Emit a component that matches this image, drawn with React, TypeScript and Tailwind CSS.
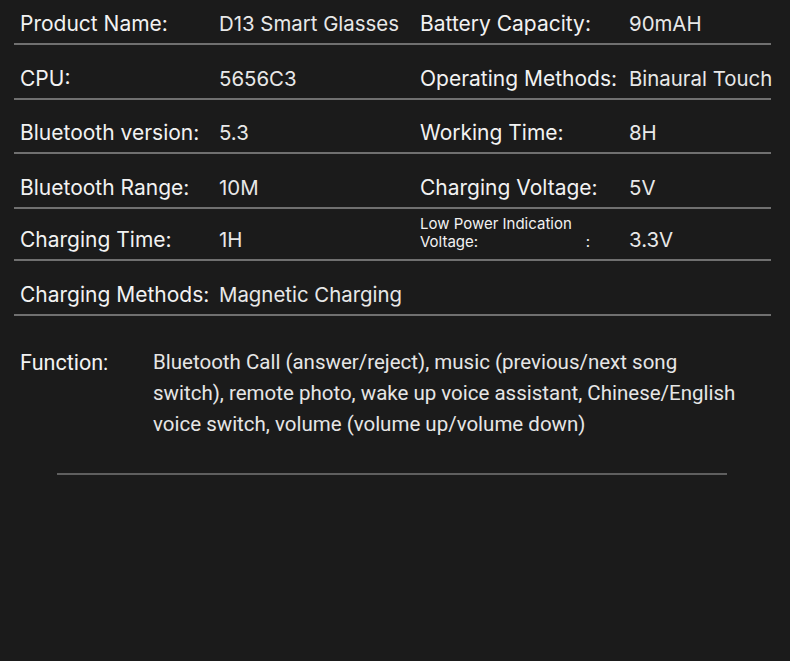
import React from 'react';

type Spec = {
  label: string;
  value: string;
  rightLabel?: string;
  rightValue?: string;
  small?: boolean;
  height: string;
};

const specs: Spec[] = [
  { label: 'Product Name:', value: 'D13 Smart Glasses', rightLabel: 'Battery Capacity:', rightValue: '90mAH', height: 'h-[45px]' },
  { label: 'CPU:', value: '5656C3', rightLabel: 'Operating Methods:', rightValue: 'Binaural Touch', height: 'h-[55px]' },
  { label: 'Bluetooth version:', value: '5.3', rightLabel: 'Working Time:', rightValue: '8H', height: 'h-[54px]' },
  { label: 'Bluetooth Range:', value: '10M', rightLabel: 'Charging Voltage:', rightValue: '5V', height: 'h-[55px]' },
  { label: 'Charging Time:', value: '1H', rightLabel: 'Low Power Indication Voltage:', rightValue: '3.3V', small: true, height: 'h-[52px]' },
  { label: 'Charging Methods:', value: 'Magnetic Charging', height: 'h-[55px]' },
];

const functionLines = [
  'Bluetooth Call (answer/reject), music (previous/next song',
  'switch), remote photo, wake up voice assistant, Chinese/English',
  'voice switch, volume (volume up/volume down)',
];

const App: React.FC = () => {
  return (
    <div className="w-[790px] h-[661px] bg-[#1b1b1b] text-[#f2f2f2] font-['Inter','Liberation_Sans',sans-serif] overflow-hidden">
      {/* Spec table */}
      <div className="ml-[14px] w-[757px]">
        {specs.map((row) => (
          <div
            key={row.label}
            className={`grid grid-cols-[199px_201px_209px_1fr] items-end pl-[6px] pb-[5px] border-b-2 border-[#707070] leading-[28px] ${row.height}`}
          >
            <div className="text-[21px] whitespace-nowrap">{row.label}</div>
            <div className={`text-[20.4px] text-[#e8e8e8] whitespace-nowrap ${row.rightLabel ? '' : 'col-span-3'}`}>
              {row.value}
            </div>
            {row.rightLabel &&
              (row.small ? (
                <div className="flex items-end pr-[39px] mb-[3px] text-[15px] leading-[18px]">
                  <div className="flex-1">
                    <div className="whitespace-nowrap">Low Power Indication</div>
                    <div>Voltage:</div>
                  </div>
                  <div>:</div>
                </div>
              ) : (
                <div className="text-[21px] whitespace-nowrap">{row.rightLabel}</div>
              ))}
            {row.rightValue && (
              <div className="text-[20.4px] text-[#e8e8e8] whitespace-nowrap">{row.rightValue}</div>
            )}
          </div>
        ))}
      </div>

      {/* Function */}
      <div className="flex pl-[20px] pt-[31px] text-[20.5px] leading-[31px] font-['Roboto','Liberation_Sans',sans-serif]">
        <div className="w-[133px] shrink-0 text-[21.5px]">Function:</div>
        <div className="text-[#e6e6e6]">
          {functionLines.map((line) => (
            <div key={line} className="whitespace-nowrap">
              {line}
            </div>
          ))}
        </div>
      </div>
      <div className="ml-[57px] mt-[33px] w-[670px] h-[2px] bg-[#5f5f5f]" />
    </div>
  );
};

export default App;
